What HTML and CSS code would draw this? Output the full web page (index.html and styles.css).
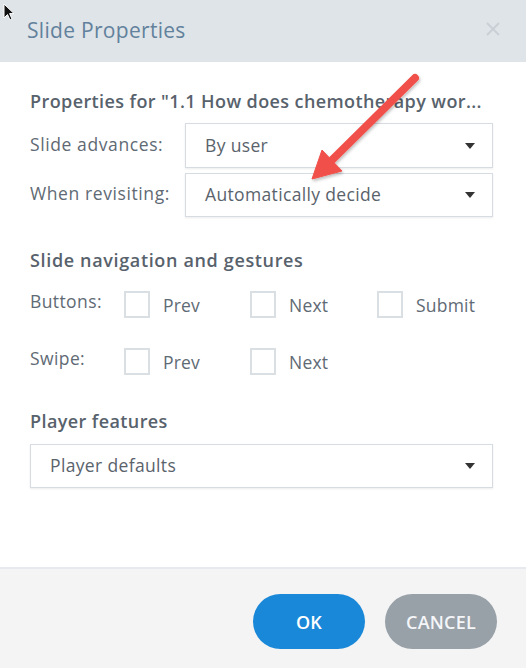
FILE: index.html
```html
<!DOCTYPE html>
<html>
<head>
<meta charset="utf-8">
<link rel="stylesheet" href="styles.css">
</head>
<body>
<div class="dialog">
  <div class="titlebar">
    <span class="title">Slide Properties</span>
    <svg class="close" width="14" height="14" viewBox="0 0 14 14"><path d="M1 1L13 13M13 1L1 13" stroke="#c9cfd5" stroke-width="2"/></svg>
  </div>
  <div class="content">
    <div class="heading h1">Properties for "1.1 How does chemotherapy wor...</div>
    <div class="field-rows">
      <div class="field-row">
        <span class="label">Slide advances:</span>
        <div class="select"><span>By user</span><span class="caret"></span></div>
      </div>
      <div class="field-row">
        <span class="label">When revisiting:</span>
        <div class="select"><span>Automatically decide</span><span class="caret"></span></div>
      </div>
    </div>

    <div class="heading h2">Slide navigation and gestures</div>
    <div class="check-row">
      <span class="clabel">Buttons:</span>
      <div class="checks">
        <label class="check"><span class="box"></span>Prev</label>
        <label class="check"><span class="box"></span>Next</label>
        <label class="check"><span class="box"></span>Submit</label>
      </div>
    </div>
    <div class="check-row second">
      <span class="clabel">Swipe:</span>
      <div class="checks">
        <label class="check"><span class="box"></span>Prev</label>
        <label class="check"><span class="box"></span>Next</label>
      </div>
    </div>

    <div class="heading h3">Player features</div>
    <div class="select full"><span>Player defaults</span><span class="caret"></span></div>
  </div>
  <div class="footer">
    <button class="btn ok">OK</button>
    <button class="btn cancel">CANCEL</button>
  </div>

  <svg class="arrow" width="526" height="668" viewBox="0 0 526 668">
    <defs>
      <filter id="sh" x="-20%" y="-20%" width="140%" height="140%">
        <feDropShadow dx="1" dy="2" stdDeviation="1.5" flood-color="#000" flood-opacity="0.25"/>
      </filter>
    </defs>
    <g filter="url(#sh)" fill="#f1504a" stroke="#f1504a">
      <line x1="415" y1="78" x2="332" y2="160" stroke-width="8" stroke-linecap="round"/>
      <polygon points="312,179 322,150 342,171" stroke-width="1" stroke-linejoin="round"/>
    </g>
  </svg>
  <svg class="cursor" width="14" height="20" viewBox="0 0 14 20">
    <path d="M1 1L1 15L4.5 11.5L7 17L9 16L6.6 10.6L11 10.6Z" fill="#111" stroke="#fff" stroke-width="1"/>
  </svg>
</div>
</body>
</html>
```

FILE: styles.css
```css
* { box-sizing: border-box; }
html, body { margin: 0; padding: 0; }
body {
  font-family: "Open Sans", "Noto Sans", sans-serif;
  color: #5d6670;
  background: #fff;
}
.dialog {
  position: relative;
  width: 526px;
  height: 668px;
  display: flex;
  flex-direction: column;
  overflow: hidden;
  background: #fff;
}
.titlebar {
  height: 62px;
  flex: none;
  background: #dfe4e8;
  display: flex;
  align-items: center;
  justify-content: space-between;
  padding: 0 26px 2px 27px;
}
.title {
  font-size: 21px;
  color: #62819c;
  letter-spacing: 0.3px;
}
.close { margin-top: -2px; }
.content {
  flex: 1;
  padding: 28px 33px 0 30px;
}
.heading {
  font-size: 18px;
  font-weight: 600;
  line-height: 22px;
  color: #58626c;
  white-space: nowrap;
}
.h1 { letter-spacing: 0.4px; }
.field-rows {
  margin-top: 11px;
  display: flex;
  flex-direction: column;
  gap: 5px;
}
.field-row {
  display: flex;
  align-items: center;
}
.label {
  width: 155px;
  flex: none;
  font-size: 17.5px;
  letter-spacing: 0.6px;
  color: #606a74;
  margin-top: -4px;
  white-space: nowrap;
}
.select {
  flex: 1;
  height: 45px;
  border: 1px solid #d6dce1;
  box-shadow: 0 1px 2px rgba(0,0,0,0.08);
  display: flex;
  align-items: center;
  justify-content: space-between;
  padding: 0 17px 0 19px;
  font-size: 17.5px;
  letter-spacing: 0.35px;
  color: #5a636c;
  background: #fff;
}
.field-row:nth-child(2) .select { height: 44px; }
.select span:first-child { margin-top: -2px; }
.caret {
  width: 0;
  height: 0;
  border-left: 5px solid transparent;
  border-right: 5px solid transparent;
  border-top: 6px solid #333;
}
.h2 { margin-top: 32px; letter-spacing: 0.65px; }
.check-row {
  margin-top: 20px;
  display: flex;
  align-items: flex-start;
}
.check-row.second { margin-top: 30px; }
.clabel {
  width: 94px;
  flex: none;
  font-size: 17.5px;
  letter-spacing: 0.4px;
  color: #606a74;
  line-height: 22px;
  margin-top: -1px;
}
.checks {
  display: grid;
  grid-template-columns: 126px 127px auto;
}
.check {
  display: flex;
  align-items: center;
  gap: 13px;
  font-size: 17.5px;
  letter-spacing: 0.2px;
  line-height: 22px;
  color: #606a74;
}
.box {
  width: 26px;
  height: 27px;
  border: 2px solid #dadfe4;
  background: #fff;
  flex: none;
}
.h3 { margin-top: 35px; letter-spacing: 0.4px; }
.select.full {
  margin-top: 12px;
  height: 44px;
  flex: none;
}
.footer {
  height: 101px;
  flex: none;
  background: #f4f4f4;
  border-top: 2px solid #e6eaee;
  display: flex;
  justify-content: flex-end;
  align-items: flex-start;
  gap: 20px;
  padding: 25px 29px 0 0;
}
.btn {
  width: 112px;
  height: 55px;
  border: none;
  border-radius: 28px;
  font-family: "Open Sans", "Noto Sans", sans-serif;
  font-size: 18px;
  font-weight: 600;
  letter-spacing: 0.2px;
  color: #fff;
  padding: 0;
}
.ok { background: #1a88d8; }
.cancel { background: #98a0a8; color: #f4f6f8; }
.arrow {
  position: absolute;
  left: 0;
  top: 0;
  pointer-events: none;
}
.cursor {
  position: absolute;
  left: 3px;
  top: 3px;
}
```
